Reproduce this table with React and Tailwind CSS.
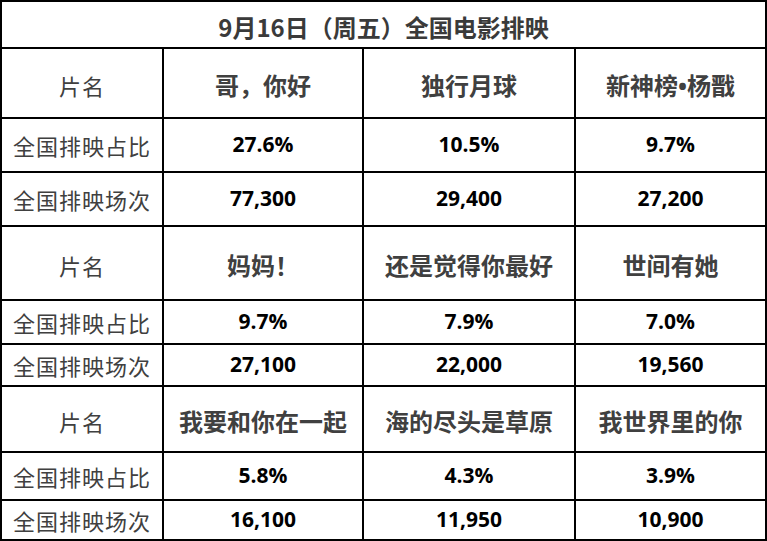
import React from "react";

const blocks = [
  {
    names: ["哥，你好", "独行月球", "新神榜•杨戬"],
    ratio: ["27.6%", "10.5%", "9.7%"],
    count: ["77,300", "29,400", "27,200"],
  },
  {
    names: ["妈妈！", "还是觉得你最好", "世间有她"],
    ratio: ["9.7%", "7.9%", "7.0%"],
    count: ["27,100", "22,000", "19,560"],
  },
  {
    names: ["我要和你在一起", "海的尽头是草原", "我世界里的你"],
    ratio: ["5.8%", "4.3%", "3.9%"],
    count: ["16,100", "11,950", "10,900"],
  },
];

const cjk = "font-['Noto_Sans_CJK_SC',sans-serif]";
const num = "font-['Open_Sans','Noto_Sans_CJK_SC',sans-serif]";

function Cell({ children, className = "" }) {
  return (
    <div className={`bg-white flex items-center justify-center ${className}`}>
      {children}
    </div>
  );
}

function Name({ text }) {
  if (text.includes("•")) {
    const [a, b] = text.split("•");
    return (
      <span>
        {a}
        <span className="font-['Open_Sans',sans-serif]">•</span>
        {b}
      </span>
    );
  }
  return <span>{text}</span>;
}

export default function App() {
  return (
    <div className="w-[767px] h-[541px] bg-black p-[2px] grid grid-cols-[160px_198px_210px_189px] grid-rows-[45px_68px_52px_52px_72px_42px_40px_64px_46px_38px] gap-[2px]">
      <Cell className={`col-span-4 ${cjk} text-[24px] font-bold text-[#3a3a3a] pt-[4px]`}>
        9月16日（周五）全国电影排映
      </Cell>
      {blocks.map((b, i) => (
        <React.Fragment key={i}>
          <Cell className={`${cjk} text-[22px] text-[#404040] tracking-[1px] pt-[4px]`}>片名</Cell>
          {b.names.map((n) => (
            <Cell key={n} className={`${cjk} text-[24px] font-bold text-[#404040] pt-[4px]`}>
              <Name text={n} />
            </Cell>
          ))}
          <Cell className={`${cjk} text-[22px] text-[#404040] tracking-[1px]`}>全国排映占比</Cell>
          {b.ratio.map((n, j) => (
            <Cell key={j} className={`${num} text-[21px] font-bold text-black`}>
              {n}
            </Cell>
          ))}
          <Cell className={`${cjk} text-[22px] text-[#404040] tracking-[1px]`}>全国排映场次</Cell>
          {b.count.map((n, j) => (
            <Cell key={j} className={`${num} text-[21px] font-bold text-black`}>
              {n}
            </Cell>
          ))}
        </React.Fragment>
      ))}
    </div>
  );
}
